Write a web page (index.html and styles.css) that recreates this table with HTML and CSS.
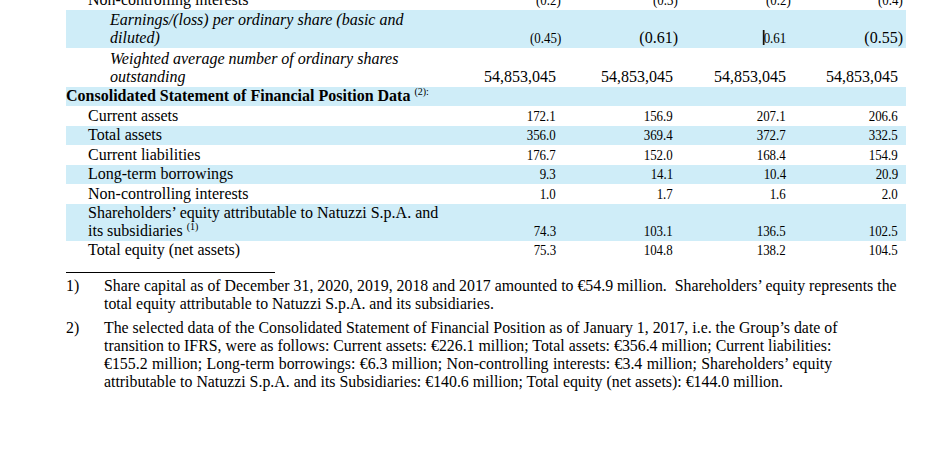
FILE: index.html
```html
<!DOCTYPE html>
<html>
<head>
<meta charset="utf-8">
<link rel="stylesheet" href="styles.css">
</head>
<body>
<div class="page">
<table class="data">
<colgroup>
<col class="c-label"><col class="c1"><col class="c2"><col class="c3"><col class="c4">
</colgroup>
<tbody>
<tr class="r20">
<td class="lbl">Non-controlling interests</td>
<td class="c1v"><span class="cn hang">(0.2)</span></td>
<td class="c2v"><span class="cn hang">(0.3)</span></td>
<td class="c3v"><span class="cn hang">(0.2)</span></td>
<td class="c4v"><span class="cn hang">(0.4)</span></td>
</tr>
<tr class="blue r38">
<td class="lbl it">Earnings/(loss) per ordinary share (basic and<br>diluted)</td>
<td class="c1v"><span class="cn hang">(0.45)</span></td>
<td class="c2v"><span class="nn hang">(0.61)</span></td>
<td class="c3v"><span class="cn cursor">0.61</span></td>
<td class="c4v"><span class="nn hang">(0.55)</span></td>
</tr>
<tr class="r39">
<td class="lbl it">Weighted average number of ordinary shares<br>outstanding</td>
<td class="c1v"><span class="nn">54,853,045</span></td>
<td class="c2v"><span class="nn">54,853,045</span></td>
<td class="c3v"><span class="nn">54,853,045</span></td>
<td class="c4v"><span class="nn">54,853,045</span></td>
</tr>
<tr class="blue r19">
<td class="head" colspan="5">Consolidated Statement of Financial Position Data <sup>(2):</sup></td>
</tr>
<tr class="r20">
<td class="lbl">Current assets</td>
<td class="c1v"><span class="cn">172.1</span></td>
<td class="c2v"><span class="cn">156.9</span></td>
<td class="c3v"><span class="cn">207.1</span></td>
<td class="c4v"><span class="cn">206.6</span></td>
</tr>
<tr class="blue r19">
<td class="lbl">Total assets</td>
<td class="c1v"><span class="cn">356.0</span></td>
<td class="c2v"><span class="cn">369.4</span></td>
<td class="c3v"><span class="cn">372.7</span></td>
<td class="c4v"><span class="cn">332.5</span></td>
</tr>
<tr class="r20">
<td class="lbl">Current liabilities</td>
<td class="c1v"><span class="cn">176.7</span></td>
<td class="c2v"><span class="cn">152.0</span></td>
<td class="c3v"><span class="cn">168.4</span></td>
<td class="c4v"><span class="cn">154.9</span></td>
</tr>
<tr class="blue r19">
<td class="lbl">Long-term borrowings</td>
<td class="c1v"><span class="cn">9.3</span></td>
<td class="c2v"><span class="cn">14.1</span></td>
<td class="c3v"><span class="cn">10.4</span></td>
<td class="c4v"><span class="cn">20.9</span></td>
</tr>
<tr class="r20">
<td class="lbl">Non-controlling interests</td>
<td class="c1v"><span class="cn">1.0</span></td>
<td class="c2v"><span class="cn">1.7</span></td>
<td class="c3v"><span class="cn">1.6</span></td>
<td class="c4v"><span class="cn">2.0</span></td>
</tr>
<tr class="blue r37">
<td class="lbl">Shareholders’ equity attributable to Natuzzi S.p.A. and<br>its subsidiaries <sup>(1)</sup></td>
<td class="c1v"><span class="cn">74.3</span></td>
<td class="c2v"><span class="cn">103.1</span></td>
<td class="c3v"><span class="cn">136.5</span></td>
<td class="c4v"><span class="cn">102.5</span></td>
</tr>
<tr class="r19">
<td class="lbl">Total equity (net assets)</td>
<td class="c1v"><span class="cn">75.3</span></td>
<td class="c2v"><span class="cn">104.8</span></td>
<td class="c3v"><span class="cn">138.2</span></td>
<td class="c4v"><span class="cn">104.5</span></td>
</tr>
</tbody>
</table>

<div class="rule"></div>

<div class="notes">
<div class="note">
<div class="num">1)</div>
<div class="txt"><span class="ln">Share capital as of December 31, 2020, 2019, 2018 and 2017 amounted to €54.9 million.&nbsp; Shareholders’ equity represents the</span><span class="ln">total equity attributable to Natuzzi S.p.A. and its subsidiaries.</span></div>
</div>
<div class="note">
<div class="num">2)</div>
<div class="txt"><span class="ln">The selected data of the Consolidated Statement of Financial Position as of January 1, 2017, i.e. the Group’s date of</span><span class="ln">transition to IFRS, were as follows: Current assets: €226.1 million; Total assets: €356.4 million; Current liabilities:</span><span class="ln wide">€155.2 million; Long-term borrowings: €6.3 million; Non-controlling interests: €3.4 million; Shareholders’ equity</span><span class="ln">attributable to Natuzzi S.p.A. and its Subsidiaries: €140.6 million; Total equity (net assets): €144.0 million.</span></div>
</div>
</div>
</div>
</body>
</html>
```

FILE: styles.css
```css
html, body {
  margin: 0;
  padding: 0;
  background: #ffffff;
}
body {
  font-family: "Liberation Serif", "Times New Roman", serif;
  color: #000;
  font-size: 16px;
  overflow: hidden;
}
.page {
  padding-left: 66px;
}
.data {
  margin-top: -10px;
  border-collapse: collapse;
  border-spacing: 0;
  table-layout: fixed;
  width: 840px;
}
.c-label { width: 379px; }
.c1 { width: 117px; }
.c2 { width: 117px; }
.c3 { width: 113px; }
.c4 { width: 114px; }

.data td {
  padding: 0 0 1px 0;
  line-height: 18px;
  vertical-align: bottom;
  white-space: nowrap;
}
.blue td { background: #cfedf8; }
.r19 { height: 19px; }
.r20 { height: 20px; }
.r37 { height: 37px; }
.r38 { height: 38px; }
.r39 { height: 39px; }

.lbl { padding-left: 22px !important; }
.lbl.it { padding-left: 44px !important; font-style: italic; }
.head { font-weight: bold; }
sup {
  font-size: 10px;
  font-weight: normal;
  line-height: 0;
  vertical-align: 6px;
}

.c1v, .c2v, .c3v { text-align: right; padding-right: 6px !important; }
.c4v { text-align: right; padding-right: 8px !important; }

.cn {
  display: inline-block;
  font-size: 15px;
  transform: scaleX(0.86);
  transform-origin: right center;
}
.nn {
  display: inline-block;
  font-size: 16px;
}
.hang { margin-right: -5px; }
.cursor { position: relative; }
.cursor::before {
  content: "";
  position: absolute;
  left: -1px;
  top: 1px;
  width: 2px;
  height: 15px;
  background: #1a1208;
}

.rule {
  width: 209px;
  height: 1px;
  background: #000;
  margin-top: 12px;
}
.notes {
  margin-top: 4px;
  font-size: 15.85px;
}
.note {
  display: flex;
  margin-bottom: 5px;
}
.num {
  width: 38px;
  flex: none;
  line-height: 18.3px;
}
.txt {
  line-height: 18.3px;
}
.ln {
  display: block;
  white-space: nowrap;
}
.ln.wide {
  word-spacing: 0.45px;
}
```
